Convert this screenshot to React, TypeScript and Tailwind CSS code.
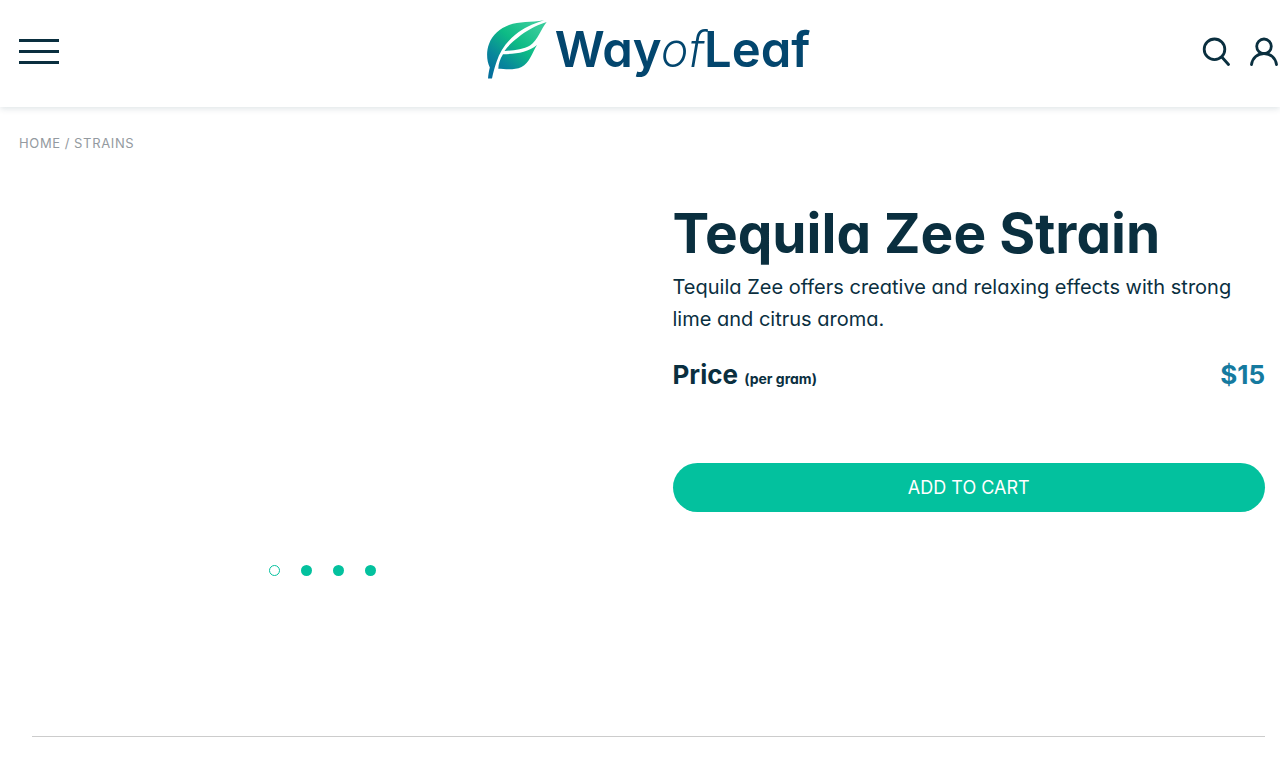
import { useState } from "react"

const slides = ["Slide 1", "Slide 2", "Slide 3", "Slide 4"]

function LeafMark() {
  return (
    <svg width="60" height="59" viewBox="0 0 60 59" aria-hidden="true">
      <defs>
        <linearGradient id="leaf" x1="4" y1="54" x2="46" y2="4" gradientUnits="userSpaceOnUse">
          <stop offset="0" stopColor="#046f9c" />
          <stop offset="0.25" stopColor="#08869b" />
          <stop offset="0.62" stopColor="#0dbb85" />
          <stop offset="1" stopColor="#35cb99" />
        </linearGradient>
      </defs>
      <g fill="url(#leaf)">
        <path d="M1 58.500C1.300 54 2 51 2.800 47.500C-.5 41-.8 31 2 24C5.500 14.500 13 8.500 22 5C32 1.500 44 2.500 57 .3C45 4 36 8.500 28.500 14.500C19 22.500 13 31 9.500 42C7.500 48 6 53 5 58.500Z" />
        <path d="M59.700 2C48 5.500 39 11 31 17.500C25 22 20.500 26.500 17.500 31C26 30.500 36 29.500 43 25.500C51 20 54 9 59.700 2Z" />
        <path d="M50 25C41 32.500 29 34 16 34.300C13 39 11.500 44 11.300 48.800C18 49 27 50.500 34.500 47C42.500 43 45 33 50 25Z" />
      </g>
    </svg>
  )
}

function SearchIcon() {
  return (
    <svg width="28" height="29" viewBox="0 0 28 29" fill="none" stroke="#0a2f3f" strokeWidth="2.800" strokeLinecap="round" aria-hidden="true">
      <circle cx="12.500" cy="12.300" r="10.300" />
      <path d="M19.800 20L26.500 27.500" />
    </svg>
  )
}

function UserIcon() {
  return (
    <svg width="28" height="29" viewBox="0 0 28 29" fill="none" stroke="#0a2f3f" strokeWidth="2.800" strokeLinecap="round" aria-hidden="true">
      <circle cx="14" cy="9.300" r="7.300" />
      <path d="M1.500 27.500C2.500 21 7.500 16.500 14 16.500S25.500 21 26.500 27.500" />
    </svg>
  )
}

function Header() {
  return (
    <header className="grid grid-cols-[1fr_auto_1fr] items-center pt-5 pr-0.5 pb-6 pl-[19px] shadow-[0_2px_6px_rgba(10,47,63,0.12)]">
      <button type="button" aria-label="Menu" className="flex w-10 cursor-pointer flex-col gap-2">
        <span className="h-[3px] w-full bg-[#0a2f3f]" />
        <span className="h-[3px] w-full bg-[#0a2f3f]" />
        <span className="h-[3px] w-full bg-[#0a2f3f]" />
      </button>

      <a href="#" aria-label="WayofLeaf" className="flex h-[63px] items-start gap-2">
        <LeafMark />
        <span className="text-[49px] leading-[60px] font-semibold text-[#03466e]">
          Way<span className="font-[Roboto,sans-serif] font-light italic">of</span>Leaf
        </span>
      </a>

      <div className="flex justify-end gap-5">
        <button type="button" aria-label="Search" className="cursor-pointer">
          <SearchIcon />
        </button>
        <button type="button" aria-label="Account" className="cursor-pointer">
          <UserIcon />
        </button>
      </div>
    </header>
  )
}

export default function App() {
  const [active, setActive] = useState(0)

  return (
    // cv11 turns on Inter's single-storey "a"
    <div className="min-h-screen bg-white font-[Inter,sans-serif] text-[#0a2f3f] [font-feature-settings:'cv11']">
      <Header />

      <nav aria-label="Breadcrumb" className="flex gap-1 px-[19px] pt-7 text-[13px] leading-4 tracking-wider text-[#949aa0]">
        <a href="#">HOME</a>
        <span>/</span>
        <a href="#">STRAINS</a>
      </nav>

      <main className="pt-12 pr-[15px] pl-8">
        <div className="grid grid-cols-2 gap-x-12 border-b border-[#ccc] pb-40">
          <div className="flex items-end justify-center gap-[21px] pr-3">
            {slides.map((slide, i) => (
              <button
                key={slide}
                type="button"
                aria-label={slide}
                onClick={() => setActive(i)}
                className={
                  i === active
                    ? "size-[11px] cursor-pointer rounded-full border border-[#03c19e]"
                    : "size-[11px] cursor-pointer rounded-full bg-[#03c19e]"
                }
              />
            ))}
          </div>

          <div className="pb-16">
            <h1 className="text-[55px] leading-[68px] font-bold">Tequila Zee Strain</h1>
            <p className="mt-1 text-xl leading-8">
              Tequila Zee offers creative and relaxing effects with strong lime and citrus aroma.
            </p>
            <div className="mt-[22px] flex items-baseline justify-between text-[26px] leading-9 font-bold">
              <h2>
                Price <span className="text-sm">(per gram)</span>
              </h2>
              <span className="text-[#157a9f]">$15</span>
            </div>
            <button
              type="button"
              className="mt-[70px] w-full cursor-pointer rounded-full bg-[#03c19e] py-2 text-lg leading-[33px] text-white"
            >
              ADD TO CART
            </button>
          </div>
        </div>
      </main>
    </div>
  )
}
